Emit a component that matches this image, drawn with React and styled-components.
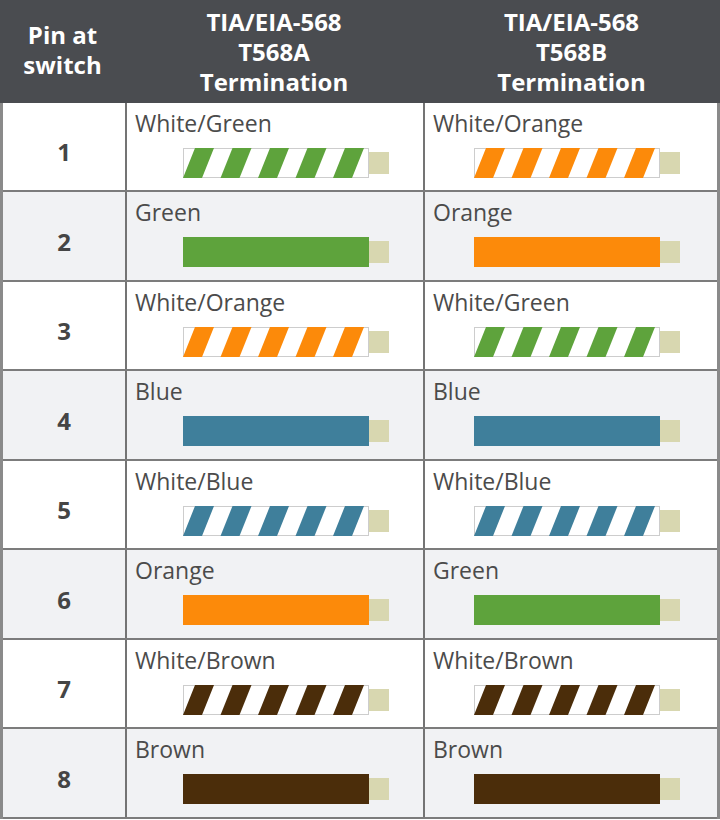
import React from "react";
import styled, { createGlobalStyle } from "styled-components";

const GREEN = "#5ea33c";
const ORANGE = "#fc8a0a";
const BLUE = "#3f7f9b";
const BROWN = "#4b2d0a";
const CAP = "#d8d7b0";

const GlobalStyle = createGlobalStyle`
  html, body { margin: 0; padding: 0; background: #ffffff; }
  body { font-family: "Open Sans", "Noto Sans", sans-serif; }
`;

const Page = styled.div`
  width: 720px;
  height: 820px;
  overflow: hidden;
  background: #ffffff;
`;

const HeaderRow = styled.div`
  display: grid;
  grid-template-columns: 125px 298px 297px;
  height: 103px;
  background: #4a4c50;
`;

const HeaderCell = styled.div`
  display: flex;
  flex-direction: column;
  align-items: center;
  justify-content: center;
  color: #ffffff;
  font-weight: 700;
  font-size: 24px;
  line-height: 30px;
  text-align: center;
  padding-bottom: ${(p) => (p.$pad ? "3px" : "0")};
`;

const Body = styled.div`
  width: 720px;
  box-sizing: border-box;
  border-left: 3px solid #8a8a8a;
  border-right: 3px solid #8a8a8a;
`;

const Row = styled.div`
  display: grid;
  grid-template-columns: 122px 298px 294px;
  height: ${(p) => (p.$tall ? "90px" : "89px")};
  box-sizing: border-box;
  border-bottom: 2px solid #7c7c7c;
  background: ${(p) => (p.$alt ? "#f1f2f4" : "#ffffff")};
`;

const PinCell = styled.div`
  display: flex;
  align-items: center;
  justify-content: center;
  font-weight: 700;
  font-size: 24px;
  color: #454545;
  padding-top: 10px;
`;

const WireCell = styled.div`
  display: flex;
  flex-direction: column;
  box-sizing: border-box;
  border-left: 2px solid #747474;
  padding: 6px 0 0 8px;
`;

const Label = styled.div`
  font-size: 23px;
  line-height: 29px;
  color: #4b4b4b;
`;

const WireBox = styled.div`
  align-self: flex-end;
  margin-right: ${(p) => p.$right}px;
  margin-top: 10px;
  height: 30px;
  line-height: 0;
`;

function Wire({ color, striped, id }) {
  const barW = 186;
  const h = 30;
  const stripes = [];
  if (striped) {
    for (let i = 0; i < 5; i++) {
      const t = 12 + 37.5 * i;
      stripes.push(
        <polygon
          key={i}
          points={`${t},0 ${t + 19},0 ${t + 7},${h} ${t - 12},${h}`}
          fill={color}
        />
      );
    }
  }
  return (
    <svg width="206" height={h} viewBox={`0 0 206 ${h}`}>
      <rect x="186" y="4" width="20" height="22" fill={CAP} />
      {striped ? (
        <g>
          <clipPath id={`clip-${id}`}>
            <rect x="0" y="0" width={barW} height={h} />
          </clipPath>
          <rect x="0.5" y="0.5" width={barW - 1} height={h - 1} fill="#ffffff" stroke="#cdcdcd" />
          <g clipPath={`url(#clip-${id})`}>{stripes}</g>
        </g>
      ) : (
        <rect x="0" y="0" width={barW} height={h} fill={color} />
      )}
    </svg>
  );
}

const rows = [
  { pin: 1, a: ["White/Green", GREEN, true], b: ["White/Orange", ORANGE, true] },
  { pin: 2, a: ["Green", GREEN, false], b: ["Orange", ORANGE, false] },
  { pin: 3, a: ["White/Orange", ORANGE, true], b: ["White/Green", GREEN, true] },
  { pin: 4, a: ["Blue", BLUE, false], b: ["Blue", BLUE, false] },
  { pin: 5, a: ["White/Blue", BLUE, true], b: ["White/Blue", BLUE, true] },
  { pin: 6, a: ["Orange", ORANGE, false], b: ["Green", GREEN, false] },
  { pin: 7, a: ["White/Brown", BROWN, true], b: ["White/Brown", BROWN, true] },
  { pin: 8, a: ["Brown", BROWN, false], b: ["Brown", BROWN, false] },
];

function Cell({ spec, right, id }) {
  const [label, color, striped] = spec;
  return (
    <WireCell>
      <Label>{label}</Label>
      <WireBox $right={right}>
        <Wire color={color} striped={striped} id={id} />
      </WireBox>
    </WireCell>
  );
}

export default function App() {
  return (
    <Page>
      <GlobalStyle />
      <HeaderRow>
        <HeaderCell $pad>
          <span>Pin at</span>
          <span>switch</span>
        </HeaderCell>
        <HeaderCell>
          <span>TIA/EIA-568</span>
          <span>T568A</span>
          <span>Termination</span>
        </HeaderCell>
        <HeaderCell>
          <span>TIA/EIA-568</span>
          <span>T568B</span>
          <span>Termination</span>
        </HeaderCell>
      </HeaderRow>
      <Body>
        {rows.map((r, i) => (
          <Row key={r.pin} $alt={i % 2 === 1} $tall={i % 2 === 1}>
            <PinCell>{r.pin}</PinCell>
            <Cell spec={r.a} right={34} id={`a${r.pin}`} />
            <Cell spec={r.b} right={37} id={`b${r.pin}`} />
          </Row>
        ))}
      </Body>
    </Page>
  );
}
